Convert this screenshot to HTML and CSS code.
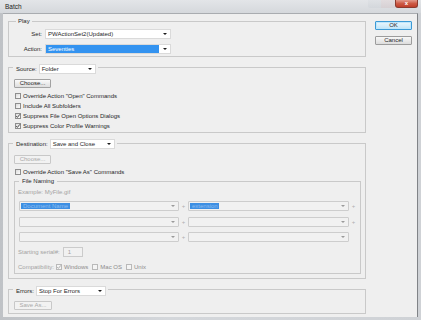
FILE: index.html
```html
<!DOCTYPE html>
<html>
<head>
<meta charset="utf-8">
<title>Batch</title>
<link rel="stylesheet" href="styles.css">
</head>
<body>
<div class="window">
  <div class="titlebar">
    <span class="title">Batch</span>
    <div class="caption">
      <span class="cap cap-min"></span>
      <span class="cap cap-max"></span>
      <span class="cap cap-close">x</span>
    </div>
  </div>
  <div class="client">
    <div class="main">
      <div class="group play">
        <div class="legend lg-play">Play</div>
        <div class="field f-set">
          <span class="flabel">Set:</span>
          <span class="select sel-play"><span class="seltext">PWActionSet2(Updated)</span><i class="arrow"></i></span>
        </div>
        <div class="field f-action">
          <span class="flabel">Action:</span>
          <span class="select sel-play"><span class="seltext hl">Seventies</span><i class="arrow"></i></span>
        </div>
      </div>

      <div class="group source">
        <div class="legend lg-sel">
          <span class="ltext">Source:</span>
          <span class="select sel-source"><span class="seltext">Folder</span><i class="arrow"></i></span>
        </div>
        <button class="btn btn-choose">Choose...</button>
        <div class="checks">
          <label class="check"><span class="box"></span>Override Action "Open" Commands</label>
          <label class="check"><span class="box"></span>Include All Subfolders</label>
          <label class="check"><span class="box on"><svg viewBox="0 0 6 6"><path d="M1.2 3.1 L2.4 4.4 L4.9 1.3"/></svg></span>Suppress File Open Options Dialogs</label>
          <label class="check"><span class="box on"><svg viewBox="0 0 6 6"><path d="M1.2 3.1 L2.4 4.4 L4.9 1.3"/></svg></span>Suppress Color Profile Warnings</label>
        </div>
      </div>

      <div class="group dest">
        <div class="legend lg-sel lg-dest">
          <span class="ltext">Destination:</span>
          <span class="select sel-dest"><span class="seltext">Save and Close</span><i class="arrow"></i></span>
        </div>
        <button class="btn btn-choose btn-disabled btn-choose2">Choose...</button>
        <label class="check check-override"><span class="box"></span>Override Action "Save As" Commands</label>

        <div class="group naming">
          <div class="legend lg-naming">File Naming</div>
          <div class="example">Example: MyFile.gif</div>
          <div class="namerow nr1">
            <span class="nsel nsel-a"><span class="nhl nhl-a">Document Name</span><i class="arrow arrow-dim"></i></span>
            <span class="plus">+</span>
            <span class="nsel nsel-b"><span class="nhl nhl-b">extension</span><i class="arrow arrow-dim"></i></span>
            <span class="plus">+</span>
          </div>
          <div class="namerow nr2">
            <span class="nsel nsel-a"><i class="arrow arrow-dim"></i></span>
            <span class="plus">+</span>
            <span class="nsel nsel-b"><i class="arrow arrow-dim"></i></span>
            <span class="plus">+</span>
          </div>
          <div class="namerow nr3">
            <span class="nsel nsel-a"><i class="arrow arrow-dim"></i></span>
            <span class="plus">+</span>
            <span class="nsel nsel-b"><i class="arrow arrow-dim"></i></span>
          </div>
          <div class="serial">
            <span class="dim">Starting serial#:</span>
            <span class="sinput">1</span>
          </div>
          <div class="compat">
            <span class="dim">Compatibility:</span>
            <label class="check dcheck"><span class="box dbox"><svg viewBox="0 0 6 6"><path d="M1.2 3.1 L2.4 4.4 L4.9 1.3"/></svg></span>Windows</label>
            <label class="check dcheck"><span class="box dbox"></span>Mac OS</label>
            <label class="check dcheck"><span class="box dbox"></span>Unix</label>
          </div>
        </div>
      </div>

      <div class="group errors">
        <div class="legend lg-sel">
          <span class="ltext">Errors:</span>
          <span class="select sel-errors"><span class="seltext">Stop For Errors</span><i class="arrow"></i></span>
        </div>
        <button class="btn btn-choose btn-disabled btn-saveas">Save As...</button>
      </div>
    </div>

    <div class="buttons">
      <button class="dbtn dbtn-default">OK</button>
      <button class="dbtn">Cancel</button>
    </div>
  </div>
</div>
</body>
</html>
```

FILE: styles.css
```css
* { box-sizing: border-box; margin: 0; padding: 0; }

html, body {
  width: 421px;
  height: 320px;
  overflow: hidden;
  background: #c3c6ca;
}

body {
  font-family: "Liberation Sans", Arial, sans-serif;
  font-size: 6px;
  color: #1f1f1f;
}

.window {
  width: 421px;
  height: 320px;
  display: flex;
  flex-direction: column;
  background: linear-gradient(90deg, #bfc2c6 0%, #d4d7db 40%, #cfd2d6 100%);
}

/* title bar */
.titlebar {
  height: 13px;
  display: flex;
  align-items: flex-start;
  justify-content: space-between;
  background: linear-gradient(180deg, #e3e5e8 0%, #d5d8dc 100%);
}

.title {
  font-size: 6.5px;
  line-height: 13px;
  padding-left: 5px;
  color: #222;
}

.caption {
  display: flex;
  align-items: flex-start;
  margin-right: 3px;
}

.cap {
  height: 8px;
  display: block;
}

.cap-min {
  width: 13px;
  border-radius: 0 0 0 2px;
  background: linear-gradient(180deg, #dcdfe3, #cfd3d8);
  opacity: 0.6;
}

.cap-max {
  width: 14px;
  background: linear-gradient(180deg, #e1d6d8, #d3c8cb);
  opacity: 0.6;
}

.cap-close {
  width: 23px;
  border: 1px solid #8c3a2e;
  border-top: none;
  border-radius: 0 0 3px 3px;
  background: linear-gradient(180deg, #e39a8c 0%, #cd5a45 50%, #c13e2a 100%);
  color: #fff;
  font-size: 6px;
  font-weight: bold;
  line-height: 7px;
  text-align: center;
}

/* client area */
.client {
  flex: 1;
  margin: 0 3px 3px 3px;
  background: #efefef;
  border-top: 1px solid #a9acb0;
  border-right: 1px solid #808387;
  display: flex;
  align-items: flex-start;
  gap: 9px;
  padding: 7px 0 0 5px;
}

.main {
  width: 358px;
  display: flex;
  flex-direction: column;
}

/* groups */
.group {
  border: 1px solid #c9c9c9;
  padding: 0 4px 0 5px;
  display: flex;
  flex-direction: column;
  align-items: flex-start;
}

.group + .group { margin-top: 10px; }

.legend {
  background: #efefef;
  display: flex;
  align-items: center;
  white-space: nowrap;
}

.lg-play {
  height: 8px;
  margin: -5px 0 0 2px;
  padding: 0 2px;
}

.lg-sel {
  height: 10px;
  margin: -4px 0 0 -1px;
  padding: 0 2px 0 3px;
  gap: 2px;
}

.lg-dest {
  margin-top: -5px;
}

.lg-naming {
  height: 8px;
  margin: -5px 0 0 0;
  padding: 0 3px;
}

/* play fields */
.field {
  display: flex;
  align-items: center;
  height: 10px;
  gap: 3px;
}

.f-set { margin-top: 4px; }
.f-action { margin-top: 5px; }
.play { padding-bottom: 2px; }

.flabel {
  width: 28px;
  text-align: right;
}

/* combo boxes */
.select {
  height: 10px;
  display: flex;
  align-items: stretch;
  background: #fff;
  border: 1px solid #dadada;
}

.seltext {
  flex: 1;
  display: flex;
  align-items: center;
  padding-left: 2px;
  white-space: nowrap;
}

.seltext.hl {
  background: #3393f0;
  color: #fff;
  margin-right: 1px;
}

.arrow {
  width: 0;
  height: 0;
  align-self: center;
  border-left: 2px solid transparent;
  border-right: 2px solid transparent;
  border-top: 2px solid #1a1a1a;
  margin: 0 3px 0 3px;
}

.arrow-dim { border-top-color: #9a9a9a; }

.sel-play { width: 126px; }
.sel-source { width: 57px; }
.sel-dest { width: 65px; }
.sel-errors { width: 70px; }

/* buttons */
.btn {
  font-family: inherit;
  font-size: 6px;
  color: #1f1f1f;
  width: 37px;
  height: 9px;
  line-height: 7px;
  border: 1px solid #a2a2a2;
  border-radius: 1px;
  background: linear-gradient(180deg, #fafafa 0%, #ebebeb 50%, #dedede 100%);
}

.btn-choose { margin-top: 5px; }

.btn-disabled {
  color: #a9a9a9;
  border-color: #c8c8c8;
  background: #f2f2f2;
}

.btn-choose2 { margin-top: 6px; }
.btn-saveas { width: 38px; }

/* checkboxes */
.checks {
  margin-top: 3px;
  display: flex;
  flex-direction: column;
}

.source { padding-bottom: 1px; }

.check {
  height: 10px;
  display: flex;
  align-items: center;
  gap: 2px;
  margin-left: 1px;
  white-space: nowrap;
}

.box {
  width: 6px;
  height: 6px;
  border: 1px solid #8e8e8e;
  background: linear-gradient(135deg, #dcdcdc, #fbfbfb);
  display: block;
  position: relative;
}

.box svg {
  position: absolute;
  left: -1px;
  top: -1px;
  width: 6px;
  height: 6px;
  fill: none;
  stroke: #3a3a3a;
  stroke-width: 0.9;
}

.check-override { margin-top: 3px; }

/* destination */
.dest { padding-bottom: 4px; }

.naming {
  margin-top: 4px;
  width: 347px;
  padding: 0 0 1px 4px;
}

.dim { color: #a3a3a3; }

.example {
  color: #a3a3a3;
  height: 10px;
  line-height: 10px;
  margin: 2px 0 0 -1px;
}

.namerow {
  display: flex;
  align-items: center;
  height: 10px;
}

.nr1 { margin-top: 4px; }
.nr2 { margin-top: 6px; }
.nr3 { margin-top: 5px; }

.nsel {
  height: 10px;
  display: flex;
  align-items: stretch;
  justify-content: space-between;
  background: #f1f1f1;
  border: 1px solid #cdcdcd;
  border-radius: 1px;
}

.nsel-a { width: 160px; }
.nsel-b { width: 161px; }

.nsel .arrow { margin-left: auto; }

.nhl {
  display: flex;
  align-items: center;
  background: #3d8fe3;
  color: #8fbdf0;
  padding-left: 2px;
  margin: 1px 0 1px 1px;
  white-space: nowrap;
}

.nhl-a { width: 49px; }
.nhl-b { width: 29px; }

.plus {
  width: 9px;
  text-align: center;
  color: #b0b0b0;
  font-size: 6px;
}

.serial {
  margin: 5px 0 0 -1px;
  height: 10px;
  display: flex;
  align-items: center;
  gap: 3px;
}

.sinput {
  width: 20px;
  height: 10px;
  border: 1px solid #cbcbcb;
  background: #f1f1f1;
  color: #a3a3a3;
  padding-left: 4px;
  line-height: 8px;
}

.compat {
  margin: 5px 0 0 -1px;
  height: 10px;
  display: flex;
  align-items: center;
  gap: 2px;
}

.dcheck {
  color: #8c8c8c;
  margin-left: 0;
  margin-right: 2px;
}

.dbox {
  border-color: #b9b9b9;
  background: #f4f4f4;
}

.dbox svg { stroke: #a6a6a6; }

/* errors */
.errors { padding-bottom: 3px; }

/* dialog buttons */
.buttons {
  width: 37px;
  display: flex;
  flex-direction: column;
  gap: 6px;
}

.dbtn {
  font-family: inherit;
  font-size: 6px;
  color: #1f1f1f;
  width: 37px;
  height: 9px;
  line-height: 7px;
  border: 1px solid #9c9c9c;
  border-radius: 1px;
  background: linear-gradient(180deg, #f8f8f8 0%, #eaeaea 50%, #dcdcdc 100%);
}

.dbtn-default {
  border-color: #3c9ad6;
  background: linear-gradient(180deg, #eaf6fd 0%, #d6eefb 50%, #bfe3f6 100%);
  box-shadow: inset 0 0 0 1px #bfe6fb;
}
```
